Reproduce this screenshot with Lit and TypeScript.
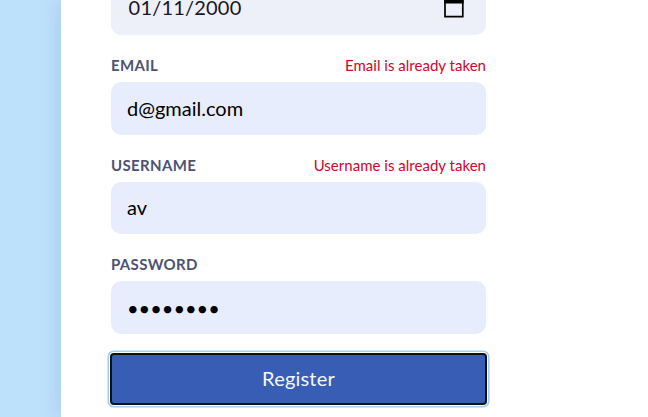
import { LitElement, html, css, nothing } from "lit";
import { customElement, property } from "lit/decorators.js";

@customElement("form-field")
class FormField extends LitElement {
  @property() label = "";
  @property() error = "";
  @property() value = "";
  @property() kind = "text";

  static styles = css`
    :host { display: block; height: 99.6px; box-sizing: border-box; }
    .head {
      display: flex; justify-content: space-between; align-items: center;
      height: 18.8px; padding-bottom: 7.7px; font-size: 15px; line-height: 20px;
    }
    .label { font-weight: 700; color: #4c5372; text-transform: uppercase; letter-spacing: 0.34px; }
    .error { color: #d0042c; letter-spacing: 0.02px; }
    .box {
      display: flex; align-items: center; justify-content: space-between;
      height: 52.6px; box-sizing: border-box; padding: 0 22px 2px 16px;
      border-radius: 10px; background: #e8edfe; color: #000;
      font-size: 20px; line-height: 26px; white-space: pre;
    }
    .date {
      background: #edf0f8; color: #1a1425; padding-left: 17.6px; padding-bottom: 4px;
      letter-spacing: 0.2px;
    }
    .password { padding-bottom: 0; }
    svg { display: block; }
  `;

  render() {
    return html`
      <div class="head">
        <span class="label">${this.label}</span>
        ${this.error ? html`<span class="error">${this.error}</span>` : nothing}
      </div>
      <div class="box ${this.kind}">
        <span class="value">${this.value}</span>
        ${this.kind === "date"
          ? html`<svg width="20" height="22" viewBox="0 0 20 22">
              <path d="M1 3H18.8V20.6H1Z" fill="none" stroke="#000" stroke-width="1.7" />
              <path d="M0.2 2H19.6V7.4H0.2Z M4 0H6V3H4Z M14 0H16V3H14Z" fill="#000" />
            </svg>`
          : nothing}
      </div>
    `;
  }
}

@customElement("app-root")
class AppRoot extends LitElement {
  static styles = css`
    :host {
      display: flex; height: 417px; overflow: hidden; box-sizing: border-box;
      padding-left: 61px; background: #bde1fb;
      font-family: Lato, "Liberation Sans", sans-serif;
    }
    .card {
      flex: 1; height: 417px; box-sizing: border-box; padding-left: 50px;
      background: #fff; box-shadow: 0 0 20px rgba(50, 90, 130, 0.18);
    }
    .form { width: 375px; margin-top: -43.8px; }
    .register {
      display: block; width: 377px; height: 52px; margin: -1.6px 0 0 -1px; padding: 0 0 2px;
      border: 2px solid #101010; border-radius: 4px; background: #375db4; color: #f4f7ff;
      box-shadow: 0 0 0 1px #fff, 0 0 0 2.6px #a3cdf5;
      font: 400 20px/24px Lato, "Liberation Sans", sans-serif; letter-spacing: 0.2px; outline: none;
    }
  `;

  render() {
    return html`
      <main class="card">
        <div class="form">
          <form-field kind="date" value="01/11/2000"></form-field>
          <form-field label="Email" value="d@gmail.com" error="Email is already taken"></form-field>
          <form-field label="Username" value="av" error="Username is already taken"></form-field>
          <form-field label="Password" kind="password" value="••••••••"></form-field>
          <button class="register">Register</button>
        </div>
      </main>
    `;
  }
}
